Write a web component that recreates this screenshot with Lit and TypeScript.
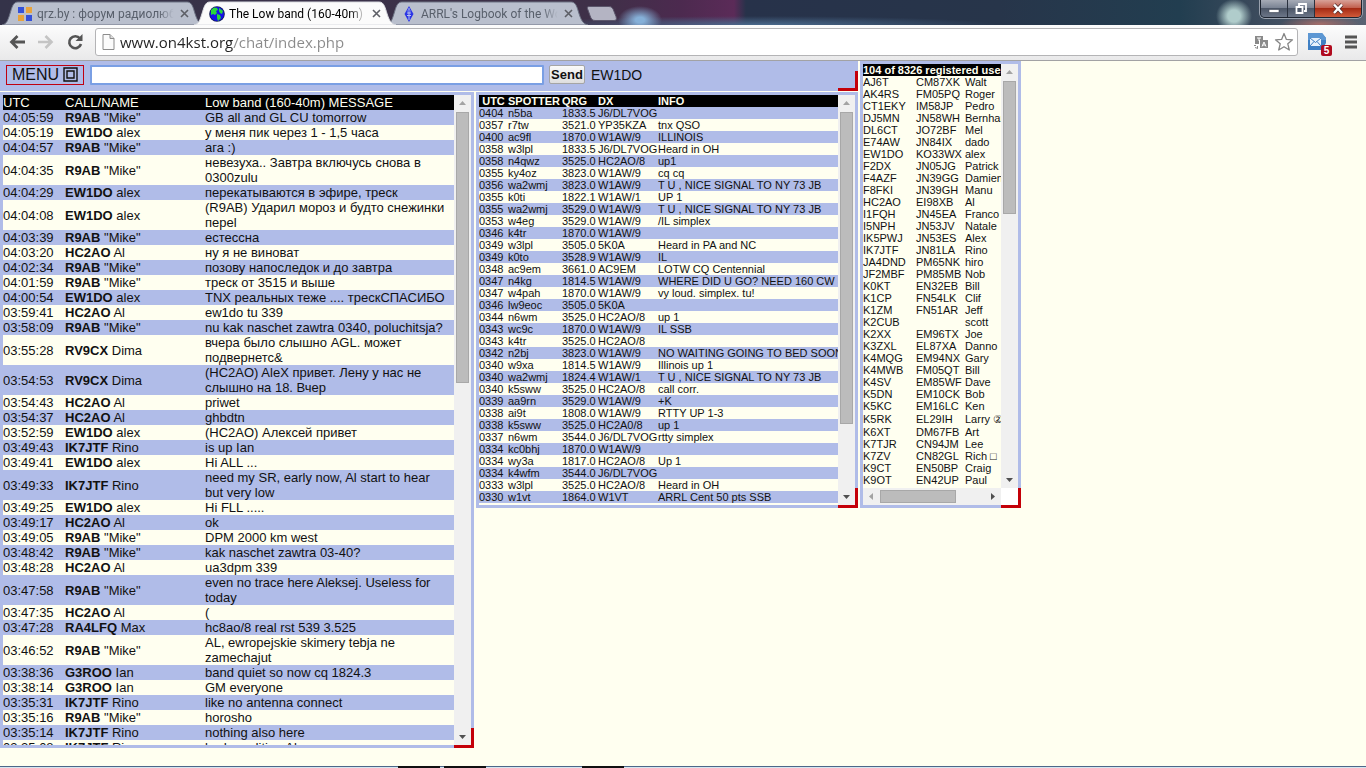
import { LitElement, html, css } from "lit";
import { customElement, property } from "lit/decorators.js";
import { styleMap } from "lit/directives/style-map.js";

type ChatRow = [time: string, call: string, name: string, lines: string[]];
type SpotRow = [utc: string, spotter: string, qrg: string, dx: string, info: string];
type UserRow = [call: string, grid: string, name: string];

const CHAT: ChatRow[] = [
  ["04:05:59", "R9AB", '"Mike"', ["GB all and GL CU tomorrow"]],
  ["04:05:19", "EW1DO", "alex", ["у меня пик через 1 - 1,5 часа"]],
  ["04:04:57", "R9AB", '"Mike"', ["ага :)"]],
  ["04:04:35", "R9AB", '"Mike"', ["невезуха.. Завтра включусь снова в", "0300zulu"]],
  ["04:04:29", "EW1DO", "alex", ["перекатываются в эфире, треск"]],
  ["04:04:08", "EW1DO", "alex", ["(R9AB) Ударил мороз и будто снежинки", "перel"]],
  ["04:03:39", "R9AB", '"Mike"', ["естессна"]],
  ["04:03:20", "HC2AO", "Al", ["ну я не виноват"]],
  ["04:02:34", "R9AB", '"Mike"', ["позову напоследок и до завтра"]],
  ["04:01:59", "R9AB", '"Mike"', ["треск от 3515 и выше"]],
  ["04:00:54", "EW1DO", "alex", ["TNX реальных теже .... трескСПАСИБО"]],
  ["03:59:41", "HC2AO", "Al", ["ew1do tu 339"]],
  ["03:58:09", "R9AB", '"Mike"', ["nu kak naschet zawtra 0340, poluchitsja?"]],
  ["03:55:28", "RV9CX", "Dima", ["вчера было слышно AGL. может", "подвернетс&"]],
  ["03:54:53", "RV9CX", "Dima", ["(HC2AO) AleX привет. Лену у нас не", "слышно на 18. Вчер"]],
  ["03:54:43", "HC2AO", "Al", ["priwet"]],
  ["03:54:37", "HC2AO", "Al", ["ghbdtn"]],
  ["03:52:59", "EW1DO", "alex", ["(HC2AO) Алексей привет"]],
  ["03:49:43", "IK7JTF", "Rino", ["is up Ian"]],
  ["03:49:41", "EW1DO", "alex", ["Hi ALL ..."]],
  ["03:49:33", "IK7JTF", "Rino", ["need my SR, early now, Al start to hear", "but very low"]],
  ["03:49:25", "EW1DO", "alex", ["Hi FLL ....."]],
  ["03:49:17", "HC2AO", "Al", ["ok"]],
  ["03:49:05", "R9AB", '"Mike"', ["DPM 2000 km west"]],
  ["03:48:42", "R9AB", '"Mike"', ["kak naschet zawtra 03-40?"]],
  ["03:48:28", "HC2AO", "Al", ["ua3dpm 339"]],
  ["03:47:58", "R9AB", '"Mike"', ["even no trace here Aleksej. Useless for", "today"]],
  ["03:47:35", "HC2AO", "Al", ["("]],
  ["03:47:28", "RA4LFQ", "Max", ["hc8ao/8 real rst 539 3.525"]],
  ["03:46:52", "R9AB", '"Mike"', ["AL, ewropejskie skimery tebja ne", "zamechajut"]],
  ["03:38:36", "G3ROO", "Ian", ["band quiet so now cq 1824.3"]],
  ["03:38:14", "G3ROO", "Ian", ["GM everyone"]],
  ["03:35:31", "IK7JTF", "Rino", ["like no antenna connect"]],
  ["03:35:16", "R9AB", '"Mike"', ["horosho"]],
  ["03:35:14", "IK7JTF", "Rino", ["nothing also here"]],
  ["03:35:08", "IK7JTF", "Rino", ["bad condition Al"]],
];

const SPOTS: SpotRow[] = [
  ["0404", "n5ba", "1833.5", "J6/DL7VOG", ""],
  ["0357", "r7tw", "3521.0", "YP35KZA", "tnx QSO"],
  ["0400", "ac9fl", "1870.0", "W1AW/9", "ILLINOIS"],
  ["0358", "w3lpl", "1833.5", "J6/DL7VOG", "Heard in OH"],
  ["0358", "n4qwz", "3525.0", "HC2AO/8", "up1"],
  ["0355", "ky4oz", "3823.0", "W1AW/9", "cq cq"],
  ["0356", "wa2wmj", "3823.0", "W1AW/9", "T U , NICE SIGNAL TO NY 73 JB"],
  ["0355", "k0ti", "1822.1", "W1AW/1", "UP 1"],
  ["0355", "wa2wmj", "3529.0", "W1AW/9", "T U , NICE SIGNAL TO NY 73 JB"],
  ["0353", "w4eg", "3529.0", "W1AW/9", "/IL simplex"],
  ["0346", "k4tr", "1870.0", "W1AW/9", ""],
  ["0349", "w3lpl", "3505.0", "5K0A", "Heard in PA and NC"],
  ["0349", "k0to", "3528.9", "W1AW/9", "IL"],
  ["0348", "ac9em", "3661.0", "AC9EM", "LOTW CQ Centennial"],
  ["0347", "n4kg", "1814.5", "W1AW/9", "WHERE DID U GO? NEED 160 CW"],
  ["0347", "w4pah", "1870.0", "W1AW/9", "vy loud. simplex. tu!"],
  ["0346", "lw9eoc", "3505.0", "5K0A", ""],
  ["0344", "n6wm", "3525.0", "HC2AO/8", "up 1"],
  ["0343", "wc9c", "1870.0", "W1AW/9", "IL SSB"],
  ["0343", "k4tr", "3525.0", "HC2AO/8", ""],
  ["0342", "n2bj", "3823.0", "W1AW/9", "NO WAITING GOING TO BED SOON"],
  ["0340", "w9xa", "1814.5", "W1AW/9", "Illinois up 1"],
  ["0340", "wa2wmj", "1824.4", "W1AW/1", "T U , NICE SIGNAL TO NY 73 JB"],
  ["0340", "k5sww", "3525.0", "HC2AO/8", "call corr."],
  ["0339", "aa9rn", "3529.0", "W1AW/9", "+K"],
  ["0338", "ai9t", "1808.0", "W1AW/9", "RTTY UP 1-3"],
  ["0338", "k5sww", "3525.0", "HC2A0/8", "up 1"],
  ["0337", "n6wm", "3544.0", "J6/DL7VOG", "rtty simplex"],
  ["0334", "kc0bhj", "1870.0", "W1AW/9", ""],
  ["0334", "wy3a", "1817.0", "HC2AO/8", "Up 1"],
  ["0334", "k4wfm", "3544.0", "J6/DL7VOG", ""],
  ["0333", "w3lpl", "3525.0", "HC2AO/8", "Heard in OH"],
  ["0330", "w1vt", "1864.0", "W1VT", "ARRL Cent 50 pts SSB"],
];

const USERS: UserRow[] = [
  ["AJ6T", "CM87XK", "Walt"], ["AK4RS", "FM05PQ", "Roger"], ["CT1EKY", "IM58JP", "Pedro"],
  ["DJ5MN", "JN58WH", "Bernhard"], ["DL6CT", "JO72BF", "Mel"], ["E74AW", "JN84IX", "dado"],
  ["EW1DO", "KO33WX", "alex"], ["F2DX", "JN05JG", "Patrick"], ["F4AZF", "JN39GG", "Damien"],
  ["F8FKI", "JN39GH", "Manu"], ["HC2AO", "EI98XB", "Al"], ["I1FQH", "JN45EA", "Franco"],
  ["I5NPH", "JN53JV", "Natale"], ["IK5PWJ", "JN53ES", "Alex"], ["IK7JTF", "JN81LA", "Rino"],
  ["JA4DND", "PM65NK", "hiro"], ["JF2MBF", "PM85MB", "Nob"], ["K0KT", "EN32EB", "Bill"],
  ["K1CP", "FN54LK", "Clif"], ["K1ZM", "FN51AR", "Jeff"], ["K2CUB", "", "scott"],
  ["K2XX", "EM96TX", "Joe"], ["K3ZXL", "EL87XA", "Danno"], ["K4MQG", "EM94NX", "Gary"],
  ["K4MWB", "FM05QT", "Bill"], ["K4SV", "EM85WF", "Dave"], ["K5DN", "EM10CK", "Bob"],
  ["K5KC", "EM16LC", "Ken"], ["K5RK", "EL29IH", "Larry ②"], ["K6XT", "DM67FB", "Art"],
  ["K7TJR", "CN94JM", "Lee"], ["K7ZV", "CN82GL", "Rich □"], ["K9CT", "EN50BP", "Craig"],
  ["K9OT", "EN42UP", "Paul"],
];

/* ---------- scroll bar drawn in flow beside or under a pane ---------- */
@customElement("scroll-bar")
export class ScrollBar extends LitElement {
  @property({ type: Boolean, reflect: true }) horizontal = false;
  /** thumb size as a share of the track, in percent */
  @property({ type: Number }) thumb = 50;

  static styles = css`
    :host { display: flex; flex-direction: column; width: 17px; flex: none; background: #f0f0f0; }
    :host([horizontal]) { flex-direction: row; width: auto; height: 17px; flex: auto; }
    .arrow { flex: none; width: 17px; height: 17px; display: grid; place-items: center; padding: 0; border: 0; background: none; }
    .arrow svg { display: block; width: 9px; height: 9px; }
    .track { flex: 1; min-height: 0; min-width: 0; padding: 0 2px; }
    :host([horizontal]) .track { padding: 2px 0; }
    .thumb { box-sizing: border-box; background: #bcbcbc; border: 1px solid #a8a8a8; height: 100%; }
  `;

  render() {
    const h = this.horizontal;
    const back = h ? "M6 1v7L2 4.500z" : "M1 6h7L4.500 2z";
    const fwd = h ? "M3 1v7l4-3.500z" : "M1 3h7L4.500 7z";
    return html`
      <button class="arrow" aria-label=${h ? "Scroll left" : "Scroll up"}><svg viewBox="0 0 9 9"><path d=${back} fill="#a3a3a3" /></svg></button>
      <div class="track"><div class="thumb" style=${styleMap({ [h ? "width" : "height"]: `${this.thumb}%` })}></div></div>
      <button class="arrow" aria-label=${h ? "Scroll right" : "Scroll down"}><svg viewBox="0 0 9 9"><path d=${fwd} fill="#505050" /></svg></button>`;
  }
}

/* ---------- browser chrome ---------- */
@customElement("browser-chrome")
export class BrowserChrome extends LitElement {
  static styles = css`
    :host { display: block; font-family: "Open Sans", "Noto Sans", sans-serif; }
    button { padding: 0; border: 0; background: none; font: inherit; color: inherit; }
    svg { display: block; flex: none; }
    .strip {
      display: flex; height: 25px; overflow: hidden;
      background:
        radial-gradient(22px 14px at 640px 20px, #86b0d8 0 20%, transparent),
        radial-gradient(18px 17px at 1234px 16px, #b0cccb 0 35%, transparent),
        radial-gradient(40px 8px at 1320px 24px, #a46c68, transparent),
        radial-gradient(240px 9px at 760px 25px, #4a6a8c, transparent),
        linear-gradient(90deg, #343349 0, #3f3048 600px, #4c2a4f 680px, #5b2b58 734px, #27324a 746px, #27354a 1000px, #223e50 1180px, #39495b 1250px, #5a6373 100%);
    }
    .tabs { display: flex; padding-left: 2px; flex: 1; }
    .tab { position: relative; display: flex; align-items: center; height: 25px; width: 202px; margin-right: -10px; box-sizing: border-box; padding: 2px 12px 0 15px; font-family: Roboto, "Noto Sans", sans-serif; font-size: 12px; color: #59606c; }
    .shape { position: absolute; inset: 0; width: 100%; height: 100%; }
    .tab.active { z-index: 1; color: #000; }
    .fav { position: relative; width: 16px; height: 16px; }
    .title { position: relative; flex: 1; min-width: 0; overflow: hidden; white-space: nowrap; margin: 0 5px 0 4px; line-height: 18px; -webkit-mask-image: linear-gradient(90deg, #000 88%, transparent 99%); }
    .close { position: relative; width: 9px; height: 9px; margin-right: 3px; }
    .new { align-self: flex-start; margin: 6px 0 0 8px; width: 32px; height: 15px; }
    .wins { display: flex; height: 18px; margin-right: 4px; box-sizing: border-box; border: 1px solid #1d2430; border-top: 0; border-radius: 0 0 5px 5px; overflow: hidden; box-shadow: 0 0 0 1px #98a0ad; }
    .win { width: 27px; display: grid; place-items: center; background: linear-gradient(#a6abb6, #7b8494 45%, #4c5667 50%, #6c7688); border-right: 1px solid #2a313e; }
    .win.shut { width: 46px; border: 0; background: linear-gradient(#d8a298, #c2614f 45%, #a52b14 50%, #d05a3a); }
    .bar { display: flex; align-items: center; height: 36px; box-sizing: border-box; border-bottom: 1px solid #a2a2a4; background: linear-gradient(#fcfcfc, #e9e9ea); padding: 0 8px 1px; }
    .nav { width: 18px; height: 18px; margin-right: 11px; }
    .omni { flex: 1; display: flex; align-items: center; height: 28px; box-sizing: border-box; background: #fff; border: 1px solid #b4b4b6; border-radius: 3px; padding: 0 3px 0 6px; }
    .url { flex: 1; min-width: 0; border: 0; outline: 0; padding: 0; margin: 0 9px 0 5px; height: 24px; font: 15px "Open Sans", "Noto Sans", sans-serif; color: transparent; background: linear-gradient(90deg, #222 113px, #8a8a8a 113px); -webkit-background-clip: text; background-clip: text; }
    .star { margin-left: 6px; }
    .mail { position: relative; margin: 0 16px 0 10px; width: 20px; height: 20px; }
    .badge { position: absolute; left: 13px; top: 13px; width: 11px; height: 11px; border-radius: 2px; background: #b00a1e; color: #fff; font: bold 10px/11px "Liberation Sans", sans-serif; text-align: center; }
  `;

  private tab(active: boolean, icon: unknown, title: string) {
    return html`<div class="tab ${active ? "active" : ""}">
      <svg class="shape" viewBox="0 0 205 25" preserveAspectRatio="none">
        <path d="M0 25C5 24 6 20 8 14S11 2 16 2H188c5 0 6 6 8 12s4 10 9 11z"
          fill=${active ? "#fbfbfb" : "#b9bfcd"} stroke=${active ? "#d9dbe0" : "#6d7384"} />
      </svg>
      ${icon}
      <span class="title">${title}</span>
      <button class="close" aria-label="Close tab"><svg width="9" height="9" viewBox="0 0 9 9"><path d="M1 1l7 7M8 1L1 8" stroke="#5d5f66" stroke-width="1.600" /></svg></button>
    </div>`;
  }

  render() {
    const squares = html`<svg class="fav" viewBox="0 0 16 16"><path d="M1 9h6v6H1zM9 1h6v6H9z" fill="#e8a33c" /><path d="M1 1h6v6H1zM9 9h6v6H9z" fill="#3450d8" /></svg>`;
    const globe = html`<svg class="fav" viewBox="0 0 16 16"><circle cx="8" cy="8" r="7.800" fill="#101a50" /><circle cx="8" cy="8" r="7" fill="#1410e8" /><path d="M2 4l3-2.500L8 2l1 2-2 1 1 2-2 2-2-1-2 1zM10 2l4 3-1 3-2-1-1-2zM8 8l3 1 1 3-3 3-1-3z" fill="#27d83a" /></svg>`;
    const diamond = html`<svg class="fav" viewBox="0 0 16 16"><path d="M8 0l4.500 8L8 16 3.500 8z" fill="#2b35e6" /><path d="M8 2v12M6 7h4M6 9.500h4" stroke="#b9c2ee" /><circle cx="8" cy="5" r="1.200" fill="#2b35e6" stroke="#b9c2ee" stroke-width=".6" /></svg>`;
    return html`
      <div class="strip">
        <div class="tabs">
          ${this.tab(false, squares, "qrz.by : форум радиолюбителей")}
          ${this.tab(true, globe, "The Low band (160-40m) chat")}
          ${this.tab(false, diamond, "ARRL's Logbook of the World")}
          <button class="new" aria-label="New tab"><svg width="32" height="15" viewBox="0 0 32 15"><path d="M3 .5h20c3 0 4 2 5 5l2 5c1 3 0 4-2 4H9c-3 0-4-2-5-5L2 4C1 2 1 .5 3 .5z" fill="#b4b4c3" stroke="#5b566b" /></svg></button>
        </div>
        <div class="wins">
          <button class="win" aria-label="Minimize"><svg width="12" height="12" viewBox="0 0 12 12"><path d="M1 6.500h10v3H1z" fill="#fff" stroke="#3c4555" stroke-width=".6" /></svg></button>
          <button class="win" aria-label="Restore"><svg width="12" height="12" viewBox="0 0 12 12"><path d="M4 3V1h7v7H9M1.500 4h6v6h-6z" fill="none" stroke="#fff" stroke-width="1.800" /></svg></button>
          <button class="win shut" aria-label="Close"><svg width="12" height="12" viewBox="0 0 12 12"><path d="M2 1.500l8 8.500M10 1.500L2 10" stroke="#4e2a2a" stroke-width="4" /><path d="M2 1.500l8 8.500M10 1.500L2 10" stroke="#fff" stroke-width="2.500" /></svg></button>
        </div>
      </div>
      <div class="bar">
        <button class="nav" aria-label="Back"><svg width="18" height="18" viewBox="0 0 18 18"><path d="M17 9H4M9.500 3L3.500 9l6 6" fill="none" stroke="#555" stroke-width="2.800" /></svg></button>
        <button class="nav" aria-label="Forward"><svg width="18" height="18" viewBox="0 0 18 18"><path d="M1 9h13M8.500 3l6 6-6 6" fill="none" stroke="#c4c4c4" stroke-width="2.600" /></svg></button>
        <button class="nav" aria-label="Reload"><svg width="18" height="18" viewBox="0 0 18 18"><path d="M14 5.500A6 6 0 1 0 15 11" fill="none" stroke="#555" stroke-width="2.600" /><path d="M16.500 1v7h-7z" fill="#555" /></svg></button>
        <div class="omni">
          <svg width="13" height="16" viewBox="0 0 13 16"><path d="M1 .5h7l4 4v11H1z" fill="#fbfbfb" stroke="#8c8c8c" /><path d="M8 .5v4h4" fill="#ddd" stroke="#8c8c8c" /></svg>
          <input class="url" type="text" aria-label="Address" value="www.on4kst.org/chat/index.php" />
          <svg width="14" height="14" viewBox="0 0 14 14"><path d="M1 1h8v4H5v4H1z" fill="#8a8a8a" /><path d="M3 3h4M5 3v3" stroke="#fff" /><path d="M6 5h8v8H6z" fill="#8a8a8a" /><path d="M8 11.500L10 7l2 4.500M8.700 10h2.600" stroke="#fff" fill="none" /><path d="M0 10.500h2M3.500 11v2M1 12.500l3 1" stroke="#8a8a8a" /></svg>
          <svg class="star" width="20" height="20" viewBox="0 0 20 20"><path d="M10 1.500l2.400 5.900 6.100.4-4.700 4 1.500 6.200L10 14.700 4.700 18l1.500-6.200-4.700-4 6.100-.4z" fill="#fff" stroke="#858585" stroke-width="1.300" stroke-linejoin="round" /></svg>
        </div>
        <button class="mail" aria-label="Mail"><svg width="20" height="20" viewBox="0 0 20 20"><path d="M0 1h14l4 5v5l-4 7H0z" fill="#3f7fc4" /><path d="M0 1h14l4 5v2H0z" fill="#5d97d3" /><path d="M2 6h11v8H2z" fill="#e9f2fb" /><path d="M2 6l5.500 4.500L13 6M2 14l4-4.500M13 14L9 9.500" fill="none" stroke="#3f7fc4" /></svg><span class="badge">5</span></button>
        <button aria-label="Menu"><svg width="14" height="14" viewBox="0 0 14 14"><path d="M1 2h12M1 7h12M1 12h12" stroke="#555" stroke-width="3" /></svg></button>
      </div>`;
  }
}

/* ---------- whole page ---------- */
@customElement("app-root")
export class AppRoot extends LitElement {
  static styles = css`
    :host { display: flex; flex-direction: column; height: 100vh; overflow: hidden; background: #fffff0; color: #111; font-family: "Liberation Sans", Arial, sans-serif; }
    .page { flex: 1; min-height: 0; display: grid; grid-template-columns: 474fr 382fr 161fr 343fr; grid-template-rows: auto minmax(0, 1fr); column-gap: 2px; row-gap: 1px; padding-bottom: 20px; }
    .entry { grid-column: 1 / 3; grid-row: 1; position: relative; display: flex; align-items: center; height: 30px; box-sizing: border-box; padding: 0 6px 3px; background: #b0bce8; }
    .menu { display: flex; align-items: center; gap: 4px; height: 20px; box-sizing: border-box; border: 1px solid #c00010; background: none; padding: 0 5px; font: 16px "Liberation Sans", Arial, sans-serif; color: #111; }
    .msg { width: 454px; height: 20px; box-sizing: border-box; margin: 0 5px 0 6px; border: 2px solid #7a9fe4; border-radius: 1px; background: #fff; padding: 0 4px; font: 13px "Liberation Sans", Arial, sans-serif; outline: 0; }
    .send { height: 19px; border: 1px solid #a5a5a5; border-radius: 2px; background: linear-gradient(#fafafa, #dedede); padding: 0 1px; font: bold 13px "Liberation Sans", Arial, sans-serif; color: #111; }
    .me { margin-left: 6px; font-size: 14px; }
    .panel { position: relative; box-sizing: border-box; border: 3px solid #b0bce8; display: flex; min-width: 0; min-height: 0; }
    .grip::after { content: ""; position: absolute; right: -3px; bottom: -3px; width: 20px; height: 20px; box-sizing: border-box; border: solid #c40008; border-width: 0 3px 3px 0; pointer-events: none; }
    .entry.grip::after { right: 0; bottom: 0; }
    .chat { grid-column: 1; grid-row: 2; }
    .spots { grid-column: 2; grid-row: 2; align-self: start; }
    .users { grid-column: 3; grid-row: 1 / 3; align-self: start; flex-direction: column; }
    .line { display: flex; min-width: 0; }
    .pane { flex: 1; min-width: 0; overflow: hidden; }
    .spots .pane, .users .pane { padding-bottom: 2px; }
    .corner { width: 17px; background: #fff; }
    table { width: 100%; border-collapse: collapse; table-layout: fixed; white-space: nowrap; }
    th, td { padding: 0; text-align: left; }
    .chat table { font-size: 13px; line-height: 15px; }
    .spots table, .users table { font-size: 11px; line-height: 12px; }
    thead { background: #000; color: #fffff0; }
    .chat th { font-weight: normal; }
    .spots th.utc { text-align: center; }
    .striped tbody tr:nth-child(odd) { background: #b0bce8; }
    .users tr { height: 12px; }
    .users tr.tall { height: 14px; }
    .c-time { width: 62px; } .c-who { width: 140px; }
    .s-utc { width: 29px; } .s-by { width: 54px; } .s-qrg { width: 36px; } .s-dx { width: 60px; }
    .u-call { width: 53px; } .u-grid { width: 49px; }
    .foot { position: absolute; left: 0; right: 0; bottom: 0; display: flex; height: 2px; background: linear-gradient(#4d6788 50%, #d5e6f0 50%); }
    .slot { width: 42px; background: #111; margin-left: 4px; }
    .slot.first { margin-left: 398px; }
    .slot.last { margin-left: 96px; }
  `;

  render() {
    return html`
      <browser-chrome></browser-chrome>
      <main class="page">
        <form class="entry grip" @submit=${(e: Event) => e.preventDefault()}>
          <button class="menu" type="button">MENU
            <svg width="15" height="15" viewBox="0 0 15 15"><path d="M1 1h13v13H1zM4 4h7v7H4z" fill="none" stroke="#111" stroke-width="1.400" /></svg>
          </button>
          <input class="msg" type="text" aria-label="Message" />
          <button class="send">Send</button>
          <span class="me">EW1DO</span>
        </form>

        <section class="panel chat grip">
          <div class="pane">
            <table class="striped">
              <colgroup><col class="c-time" /><col class="c-who" /><col /></colgroup>
              <thead><tr><th>UTC</th><th>CALL/NAME</th><th>Low band (160-40m) MESSAGE</th></tr></thead>
              <tbody>
                ${CHAT.map(([t, call, name, lines]) => html`<tr><td>${t}</td><td><b>${call}</b> ${name}</td><td>${lines.map((l, i) => (i ? html`<br />${l}` : l))}</td></tr>`)}
              </tbody>
            </table>
          </div>
          <scroll-bar .thumb=${44}></scroll-bar>
        </section>

        <section class="panel spots grip">
          <div class="pane">
            <table class="striped">
              <colgroup><col class="s-utc" /><col class="s-by" /><col class="s-qrg" /><col class="s-dx" /><col /></colgroup>
              <thead><tr><th class="utc">UTC</th><th>SPOTTER</th><th>QRG</th><th>DX</th><th>INFO</th></tr></thead>
              <tbody>
                ${SPOTS.map((row) => html`<tr>${row.map((c) => html`<td>${c}</td>`)}</tr>`)}
              </tbody>
            </table>
          </div>
          <scroll-bar .thumb=${83}></scroll-bar>
        </section>

        <section class="panel users grip">
          <div class="line">
            <div class="pane">
              <table>
                <colgroup><col class="u-call" /><col class="u-grid" /><col /></colgroup>
                <thead><tr><th colspan="3">104 of 8326 registered users</th></tr></thead>
                <tbody>
                  ${USERS.map((row) => html`<tr class=${row[2].includes("②") ? "tall" : ""}>${row.map((c) => html`<td>${c}</td>`)}</tr>`)}
                </tbody>
              </table>
            </div>
            <scroll-bar .thumb=${34}></scroll-bar>
          </div>
          <div class="line">
            <scroll-bar horizontal .thumb=${73}></scroll-bar>
            <span class="corner"></span>
          </div>
        </section>
      </main>
      <div class="foot"><span class="slot first"></span><span class="slot"></span><span class="slot last"></span></div>`;
  }
}
